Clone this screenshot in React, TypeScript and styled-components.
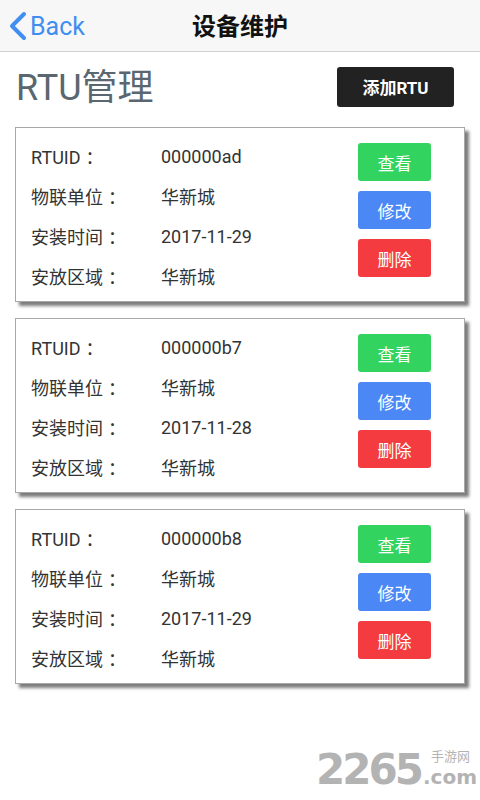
import React from "react";
import styled, { createGlobalStyle } from "styled-components";

const GlobalStyle = createGlobalStyle`
  html, body {
    margin: 0;
    padding: 0;
    background: #ffffff;
  }
  body {
    font-family: "Roboto", "Noto Sans CJK SC", sans-serif;
    width: 480px;
    height: 800px;
    overflow: hidden;
  }
`;

type Rtu = { id: string; unit: string; date: string; area: string };

const rtus: Rtu[] = [
  { id: "000000ad", unit: "华新城", date: "2017-11-29", area: "华新城" },
  { id: "000000b7", unit: "华新城", date: "2017-11-28", area: "华新城" },
  { id: "000000b8", unit: "华新城", date: "2017-11-29", area: "华新城" },
];

const App = () => {
  return (
    <Page>
      <GlobalStyle />
      <NavBar>
        <BackLink>
          <svg width="20" height="30" viewBox="0 0 20 30">
            <path d="M16 3 L4 15 L16 27" fill="none" stroke="#3f8ef0" strokeWidth="4" strokeLinecap="round" strokeLinejoin="round" />
          </svg>
          <span>Back</span>
        </BackLink>
        <NavTitle>设备维护</NavTitle>
      </NavBar>

      <Header>
        <PageTitle>RTU管理</PageTitle>
        <AddButton>添加RTU</AddButton>
      </Header>

      <CardList>
        {rtus.map((r) => (
          <Card key={r.id}>
            <Info>
              <Row><Label>RTUID<Colon>：</Colon></Label><Value>{r.id}</Value></Row>
              <Row><Label>物联单位<Colon>：</Colon></Label><Value>{r.unit}</Value></Row>
              <Row><Label>安装时间<Colon>：</Colon></Label><Value>{r.date}</Value></Row>
              <Row><Label>安放区域<Colon>：</Colon></Label><Value>{r.area}</Value></Row>
            </Info>
            <Actions>
              <ActionButton $color="#33d35f">查看</ActionButton>
              <ActionButton $color="#4b87f5">修改</ActionButton>
              <ActionButton $color="#f43c40">删除</ActionButton>
            </Actions>
          </Card>
        ))}
      </CardList>

      <Watermark>
        <WmNum>2265</WmNum>
        <WmSide>
          <WmCn>手游网</WmCn>
          <WmCom>.com</WmCom>
        </WmSide>
      </Watermark>
    </Page>
  );
};

export default App;

const Page = styled.div`
  position: relative;
  width: 480px;
  height: 800px;
  background: #fff;
`;

const NavBar = styled.div`
  position: relative;
  height: 51px;
  background: #f7f7f7;
  border-bottom: 1px solid #d0d0d0;
  display: flex;
  align-items: center;
  justify-content: center;
`;

const BackLink = styled.div`
  position: absolute;
  left: 8px;
  top: 11px;
  display: flex;
  align-items: center;
  color: #3f8ef0;
  font-size: 25px;
  font-family: "Roboto", sans-serif;
  span {
    margin-left: 2px;
  }
`;

const NavTitle = styled.div`
  font-size: 24px;
  font-weight: 700;
  color: #111;
  font-family: "Noto Sans CJK SC", sans-serif;
  margin-top: -2px;
`;

const Header = styled.div`
  display: flex;
  justify-content: space-between;
  align-items: center;
  padding: 9px 26px 0 16px;
  height: 54px;
`;

const PageTitle = styled.div`
  font-size: 36px;
  color: #5b6770;
  font-family: "Roboto", "Noto Sans CJK SC", sans-serif;
  line-height: 50px;
  margin-top: -1px;
`;

const AddButton = styled.div`
  width: 117px;
  height: 40px;
  margin-top: -3px;
  background: #222;
  border-radius: 3px;
  color: #fff;
  font-size: 17px;
  font-weight: 700;
  display: flex;
  align-items: center;
  justify-content: center;
`;

const CardList = styled.div`
  display: flex;
  flex-direction: column;
  gap: 16px;
  padding: 12px 15px 0 15px;
`;

const Card = styled.div`
  display: flex;
  justify-content: space-between;
  box-sizing: border-box;
  height: 175px;
  padding: 8px 33px 4px 15px;
  border: 1px solid #a8a8a8;
  background: #fff;
  box-shadow: 4px 4px 3px #7d7d7d;
`;

const Info = styled.div`
  display: flex;
  flex-direction: column;
`;

const Row = styled.div`
  display: flex;
  height: 40px;
  align-items: center;
  font-size: 18px;
  color: #333;
`;

const Label = styled.span`
  width: 130px;
`;

const Colon = styled.span`
  margin-left: 5px;
`;

const Value = styled.span``;

const Actions = styled.div`
  display: flex;
  flex-direction: column;
  gap: 10px;
  padding-top: 7px;
`;

const ActionButton = styled.div<{ $color: string }>`
  width: 73px;
  height: 38px;
  background: ${(p) => p.$color};
  border-radius: 3px;
  color: #fff;
  font-size: 17px;
  display: flex;
  align-items: center;
  justify-content: center;
`;

const Watermark = styled.div`
  position: absolute;
  right: 3px;
  top: 748px;
  display: flex;
  align-items: flex-start;
  color: #b3b3b3;
`;

const WmNum = styled.div`
  font-size: 42px;
  font-weight: 900;
  font-family: "DejaVu Sans", sans-serif;
  letter-spacing: -3px;
  line-height: 44px;
`;

const WmSide = styled.div`
  display: flex;
  flex-direction: column;
  gap: 4px;
  margin-left: 2px;
  padding-top: 1px;
`;

const WmCn = styled.div`
  font-size: 13px;
  line-height: 14px;
  font-family: "Noto Sans CJK SC", sans-serif;
  padding-left: 8px;
`;

const WmCom = styled.div`
  font-size: 20px;
  line-height: 20px;
  font-family: "DejaVu Sans", sans-serif;
  font-weight: 700;
`;
